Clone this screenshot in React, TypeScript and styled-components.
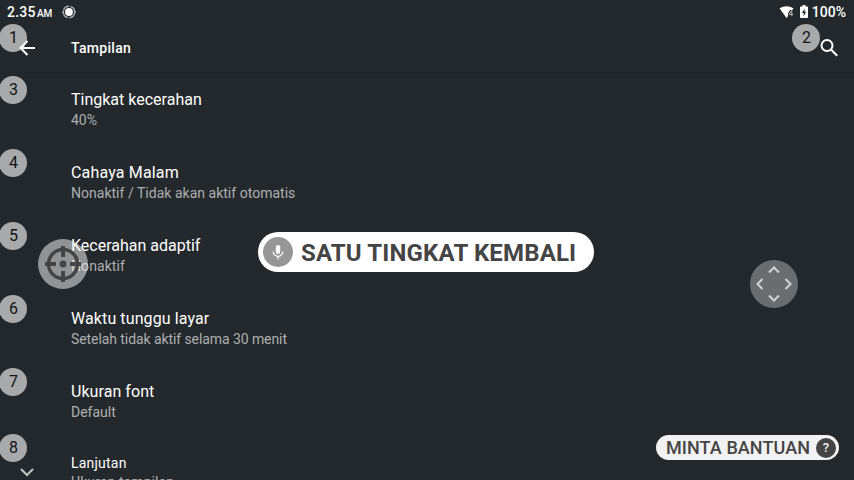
import React from "react";
import styled, { createGlobalStyle } from "styled-components";

const Global = createGlobalStyle`
  *{box-sizing:border-box}
  html,body{margin:0;background:#23282c;overflow:hidden}
`;
const Screen = styled.main`
  position: relative; width: 854px; height: 480px; overflow: hidden;
  display: flex; flex-direction: column;
  background: #23282c; color: #fff; font-family: Roboto, "Noto Sans", sans-serif;
`;
const StatusBar = styled.header`
  height: 24px; flex: none; display: flex; align-items: center; padding: 0 8px 0 7px;
  font-size: 14px; font-weight: 500; line-height: 24px;
`;
const Clock = styled.span`width: 55px; height: 24px; white-space: nowrap; letter-spacing: 0.2px;`;
const Meridiem = styled.span`font-size: 10px; margin-left: 1.5px; letter-spacing: -0.2px;`;
const StatusIcons = styled.div`margin-left: auto; display: flex; align-items: center; svg { display: block; }`;
const Percent = styled.span`margin-left: -1px;`;
const AppBar = styled.div`
  height: 49px; flex: none; display: flex; align-items: center; padding: 0 15px 0 17px;
  border-bottom: 1px solid #202529;
  svg { display: block; }
`;
const PageTitle = styled.h1`margin: 0 auto 0 34px; font-size: 14px; font-weight: 500; line-height: 20px; letter-spacing: 0.3px;`;
const List = styled.section`flex: 1; min-height: 0; padding-left: 71px;`;
const Row = styled.div`height: 73px; padding-top: 16px;`;
const RowTitle = styled.div<{ $small?: boolean; $track: number }>`
  font-size: ${(p) => (p.$small ? 14 : 16)}px; line-height: 22px;
  height: ${(p) => (p.$small ? 20 : 21)}px; margin-top: ${(p) => (p.$small ? -2 : 0)}px;
  letter-spacing: ${(p) => p.$track}px;
`;
const RowSummary = styled.div<{ $track: number }>`
  font-size: 14px; line-height: 20px; color: #adb0b2; letter-spacing: ${(p) => p.$track}px;
`;
const Badge = styled.div<{ $x: number; $y: number }>`
  position: absolute; left: ${(p) => p.$x}px; top: ${(p) => p.$y}px;
  width: 28px; height: 28px; border-radius: 50%; background: rgba(255,255,255,.6);
  color: #111416; font-size: 16px; line-height: 27px; text-align: center; padding-left: 1px;
`;
const Float = styled.div<{ $x: number; $y: number; $size: number; $alpha: number }>`
  position: absolute; left: ${(p) => p.$x}px; top: ${(p) => p.$y}px;
  width: ${(p) => p.$size}px; height: ${(p) => p.$size}px; border-radius: 50%;
  background: rgba(255,255,255,${(p) => p.$alpha});
  svg { display: block; width: 100%; height: 100%; }
`;
const Expand = styled.svg`position: absolute; left: 19px; top: 466px;`;
const Toast = styled.div`
  position: absolute; left: 258px; top: 232px; width: 336px; height: 40px; border-radius: 20px;
  background: #fff; color: #444; display: flex; align-items: center; padding-left: 5px; gap: 8px;
  font-size: 24px; font-weight: 700; white-space: nowrap; line-height: 40px; letter-spacing: 0.16px;
`;
const ToastText = styled.span`padding-top: 2px;`;
const HelpChip = styled.div`
  position: absolute; left: 656px; top: 435px; width: 183px; height: 25px; border-radius: 13px;
  background: #f2f2f2; color: #444; display: flex; align-items: center; justify-content: space-between; padding: 0 3px 0 10px;
  font-size: 18px; font-weight: 500; line-height: 25px; white-space: nowrap; letter-spacing: 0.08px;
`;
const HelpMark = styled.span`
  width: 20px; height: 20px; border-radius: 50%; background: #444; color: #f2f2f2;
  font-size: 13px; line-height: 20px; text-align: center; font-weight: 500;
`;

const rows = [
  { title: "Tingkat kecerahan", summary: "40%", track: 0, summaryTrack: 0 },
  { title: "Cahaya Malam", summary: "Nonaktif / Tidak akan aktif otomatis", track: 0.16, summaryTrack: 0.02 },
  { title: "Kecerahan adaptif", summary: "Nonaktif", track: 0, summaryTrack: 0.08 },
  { title: "Waktu tunggu layar", summary: "Setelah tidak aktif selama 30 menit", track: 0.1, summaryTrack: -0.08 },
  { title: "Ukuran font", summary: "Default", track: 0.06, summaryTrack: 0 },
  { title: "Lanjutan", summary: "Ukuran tampilan", track: 0.22, summaryTrack: 0.1 },
];
const badges = [[-1, 24], [792, 24], [-1, 76], [-1, 149], [-1, 222], [-1, 295], [-1, 368], [-1, 434]];

export default function App() {
  return (
    <>
      <Global />
      <Screen>
        <StatusBar>
          <Clock>2.35<Meridiem>AM</Meridiem></Clock>
          <svg width="14" height="14" viewBox="0 0 14 14">
            <circle cx="7" cy="7" r="3.9" fill="#fff" />
            <circle cx="7" cy="7" r="5.7" fill="none" stroke="#a4a7a9" strokeWidth="1.5" strokeDasharray="7.4 1.55" strokeDashoffset="-1" />
            <path d="M0 7h2M12 7h2" stroke="#b5b8ba" strokeWidth="1.3" />
          </svg>
          <StatusIcons>
            <svg width="16" height="14" viewBox="0 0 16 14">
              <path d="M.5 3.200Q7.500-.8 14.500 3.200L13.200 5H11L9 8.500V11L7.500 13Z" fill="#fff" />
              <path d="M12.800 5.200v6M12.800 5.400L10.200 9.400h4" fill="none" stroke="#b3b6b8" strokeWidth="1" />
            </svg>
            <svg width="18" height="14" viewBox="0 0 18 14">
              <path d="M7.500 0h3v1.500h1.700q.8 0 .8.8v9.900q0 .8-.8.8H5.800q-.8 0-.8-.8V2.300q0-.8.8-.8h1.700z" fill="#fff" />
              <path d="M9.600 3.400L7 8h1.600v3.400L11.100 6.700H9.600z" fill="#23282c" />
            </svg>
            <Percent>100%</Percent>
          </StatusIcons>
        </StatusBar>
        <AppBar>
          <svg width="20" height="20" viewBox="0 0 20 20" fill="none" stroke="#fff" strokeWidth="2">
            <path d="M18 10H4M10.500 3L3.500 10l7 7" />
          </svg>
          <PageTitle>Tampilan</PageTitle>
          <svg width="20" height="20" viewBox="0 0 20 20" fill="none" stroke="#fff" strokeWidth="2">
            <circle cx="8" cy="7.500" r="5.500" /><path d="M12 11.500L18.200 17.700" />
          </svg>
        </AppBar>
        <List>
          {rows.map((r, i) => (
            <Row key={r.title}>
              <RowTitle $small={i === 5} $track={r.track}>{r.title}</RowTitle>
              <RowSummary $track={r.summaryTrack}>{r.summary}</RowSummary>
            </Row>
          ))}
        </List>
        <Expand width="16" height="12" viewBox="0 0 16 12" fill="none" stroke="#c3c5c6" strokeWidth="2"><path d="M2 3l6 6 6-6" /></Expand>
        {badges.map(([x, y], i) => <Badge key={i} $x={x} $y={y}>{i + 1}</Badge>)}
        <Float $x={38} $y={239} $size={50} $alpha={0.5}>
          <svg viewBox="0 0 50 50" fill="none" stroke="#444" strokeWidth="4">
            <circle cx="25" cy="25" r="14.500" strokeWidth="3.400" />
            <circle cx="25" cy="25" r="3.500" fill="#444" stroke="none" />
            <path d="M25 7v11M25 32v11M7 25h11M32 25h11" />
          </svg>
        </Float>
        <Float $x={750} $y={260} $size={48} $alpha={0.32}>
          <svg viewBox="0 0 48 48" fill="none" stroke="#d2d3d4" strokeWidth="2">
            <path d="M19 12.500L24 7.500l5 5M19 35.500L24 40.500l5-5M12.500 19L7.500 24l5 5M35.500 19L40.500 24l-5 5" />
          </svg>
        </Float>
        <Toast>
          <svg width="30" height="30" viewBox="0 0 30 30">
            <circle cx="15" cy="15" r="15" fill="#969696" />
            <rect x="12.800" y="8" width="4.400" height="9" rx="2.200" fill="#fff" />
            <path d="M10.200 14.500a4.800 4.800 0 0 0 9.600 0M15 19.500v3" fill="none" stroke="#fff" strokeWidth="1.200" />
          </svg>
          <ToastText>SATU TINGKAT KEMBALI</ToastText>
        </Toast>
        <HelpChip>MINTA BANTUAN<HelpMark>?</HelpMark></HelpChip>
      </Screen>
    </>
  );
}
